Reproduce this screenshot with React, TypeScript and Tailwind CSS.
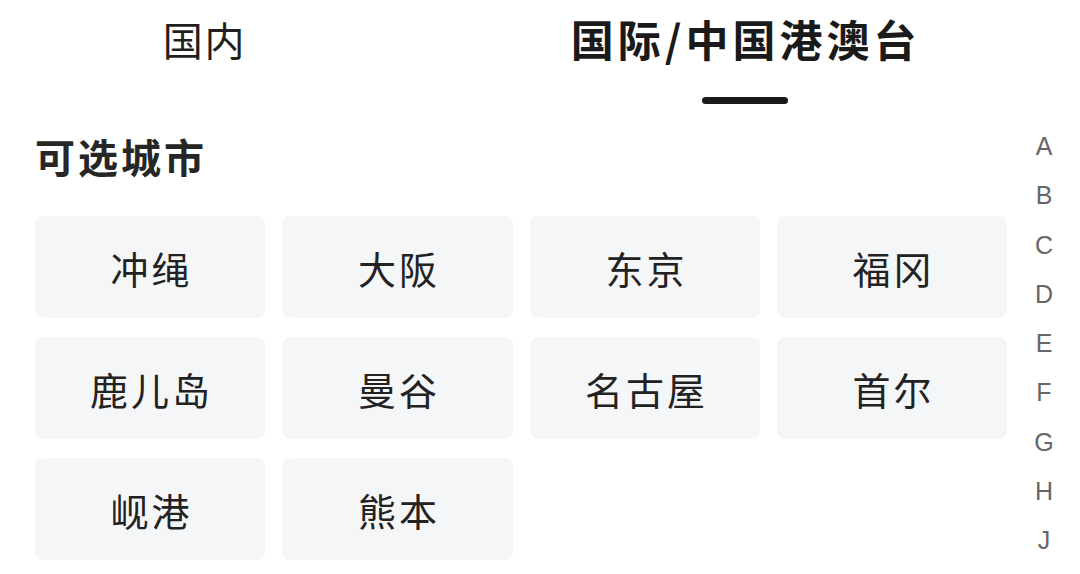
import React from "react";

const cities = ["冲绳", "大阪", "东京", "福冈", "鹿儿岛", "曼谷", "名古屋", "首尔", "岘港", "熊本"];
const letters = ["A", "B", "C", "D", "E", "F", "G", "H", "J"];

export default function App() {
  return (
    <div
      className="w-[1080px] h-[574px] bg-white overflow-hidden relative text-[#1f1f1f]"
      style={{ fontFamily: '"Noto Sans CJK SC", "Noto Sans", sans-serif' }}
    >
      <div className="flex h-[110px]">
        <div className="w-[408px] flex justify-center pt-[9px]">
          <span className="text-[40px] leading-[60px] font-normal tracking-[2px] -mr-[2px]">国内</span>
        </div>
        <div className="w-[674px] flex flex-col items-center pt-[7px]">
          <span className="text-[43px] leading-[62px] font-bold tracking-[4px] -mr-[4px] text-[#1a1a1a]">国际/中国港澳台</span>
          <div className="mt-[28px] ml-[2px] w-[86px] h-[7px] rounded-full bg-[#1a1a1a]" />
        </div>
      </div>
      <div className="flex">
        <div className="flex-1 pl-[35px]">
          <div className="text-[40px] leading-[60px] font-bold mt-[16px] tracking-[3px] text-[#262626]">可选城市</div>
          <div className="grid grid-cols-[230px_231px_230px_230px] gap-x-[17px] gap-y-[19px] mt-[30px]">
            {cities.map((c) => (
              <div
                key={c}
                className="h-[102px] rounded-[8px] bg-[#f5f6f8] flex items-center justify-center text-[38px] text-[#222]"
              >
                <span className="tracking-[3px] -mr-[3px]">{c}</span>
              </div>
            ))}
          </div>
        </div>
        <div className="w-[72px] flex flex-col items-center pt-[12px]">
          {letters.map((l) => (
            <div
              key={l}
              className="h-[49.3px] leading-[49.3px] text-[25px] font-light text-[#666]"
              style={{ fontFamily: '"Liberation Sans", "Noto Sans", sans-serif' }}
            >
              {l}
            </div>
          ))}
        </div>
      </div>
    </div>
  );
}
